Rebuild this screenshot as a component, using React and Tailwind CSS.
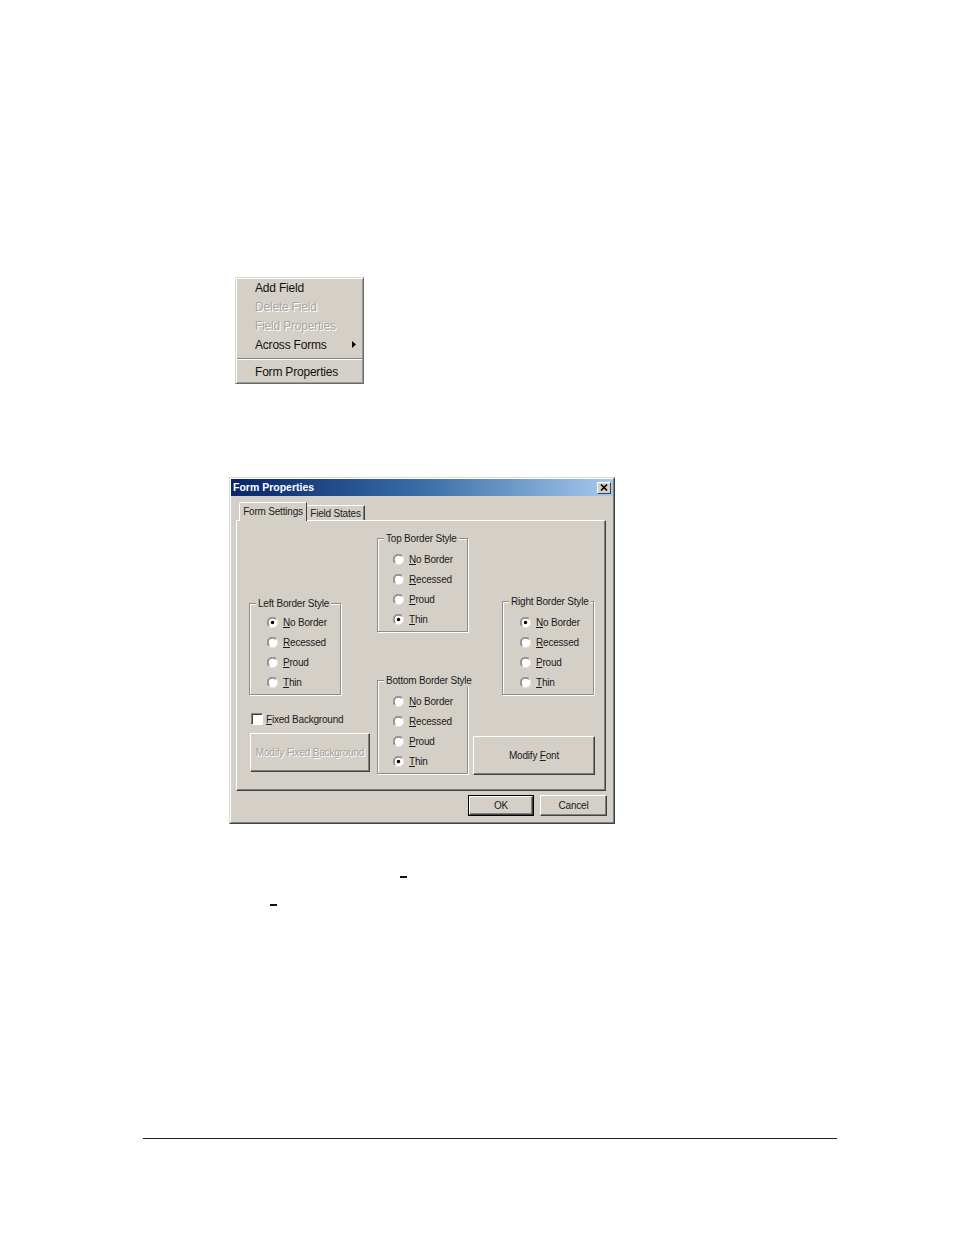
import React from 'react';

const FONT = "font-['Liberation_Sans',Arial,sans-serif]";

function MenuItem({ label, disabled, submenu }) {
  return (
    <div className="flex items-center h-[19px] pl-[19px] pr-[7px]">
      <span className={disabled ? 'text-[#a9a7a3] [text-shadow:1px_1px_0_#fff]' : 'text-[#111]'}>{label}</span>
      {submenu && (
        <svg width="4" height="7" viewBox="0 0 4 7" className="ml-auto">
          <polygon points="0,0 4,3.5 0,7" fill="#000" />
        </svg>
      )}
    </div>
  );
}

function ContextMenu() {
  return (
    <div className="self-start ml-[235px] mt-[277px] w-[129px] bg-[#d4d0c8] border border-t-[#dcd9d3] border-l-[#dcd9d3] border-r-[#6a6a6a] border-b-[#6a6a6a] shadow-[inset_1px_1px_0_#fff,inset_-1px_-1px_0_#9a9a9a] pb-[2px] text-[12px] tracking-[-0.2px]">
      <MenuItem label="Add Field" />
      <MenuItem label="Delete Field" disabled />
      <MenuItem label="Field Properties" disabled />
      <MenuItem label="Across Forms" submenu />
      <div className="h-[8px] flex items-center px-[1px]">
        <div className="w-full h-px bg-[#808080] shadow-[0_1px_0_#fff]" />
      </div>
      <MenuItem label="Form Properties" />
    </div>
  );
}

function Radio({ checked }) {
  return (
    <svg width="11" height="11" viewBox="0 0 12 12" className="shrink-0">
      <circle cx="6" cy="6" r="5.5" fill="#fff" />
      <path d="M10.2 1.8 A5.6 5.6 0 0 0 1.8 10.2" stroke="#8a8a8a" strokeWidth="1" fill="none" />
      <path d="M9.4 2.6 A4.6 4.6 0 0 0 2.6 9.4" stroke="#5a5a5a" strokeWidth="1" fill="none" />
      <path d="M1.8 10.2 A5.6 5.6 0 0 0 10.2 1.8" stroke="#e4e2de" strokeWidth="1" fill="none" />
      {checked && <circle cx="6" cy="6" r="1.9" fill="#000" />}
    </svg>
  );
}

function Mnemonic({ text }) {
  return (
    <span>
      <span className="underline underline-offset-[1px] decoration-1">{text[0]}</span>
      {text.slice(1)}
    </span>
  );
}

function GroupBox({ title, checked, className, padLeft, padTop }) {
  const options = ['No Border', 'Recessed', 'Proud', 'Thin'];
  return (
    <div className={`relative border border-[#8f8d89] shadow-[inset_1px_1px_0_#fff,1px_1px_0_#fff] ${className}`}>
      <span className="absolute -top-[7px] left-[6px] px-[2px] bg-[#d4d0c8] leading-[13px] whitespace-nowrap">{title}</span>
      <div className={`${padLeft} ${padTop} pb-[2px]`}>
        {options.map((o) => (
          <div key={o} className="flex items-center h-[20px] gap-[5px]">
            <Radio checked={o === checked} />
            <Mnemonic text={o} />
          </div>
        ))}
      </div>
    </div>
  );
}

function Button({ children, className, isDefault }) {
  return (
    <div className={`flex items-center justify-center bg-[#d4d0c8] ${isDefault ? 'border border-black' : ''} ${className}`}>
      <div className="w-full h-full flex items-center justify-center border border-t-white border-l-white border-r-[#404040] border-b-[#404040] shadow-[inset_-1px_-1px_0_#808080]">
        {children}
      </div>
    </div>
  );
}

function Dialog() {
  return (
    <div className="self-start ml-[229px] mt-[93px] w-[386px] bg-[#d4d0c8] border border-t-[#dcd9d3] border-l-[#dcd9d3] border-r-[#404040] border-b-[#404040] text-[10px] tracking-[-0.2px] text-[#1a1a1a]">
      <div className="border border-t-white border-l-white border-r-[#808080] border-b-[#808080]">
        {/* title bar */}
        <div className="h-[17px] flex items-center pl-[2px] pr-[2px] bg-gradient-to-r from-[#0a246a] via-[#3a6ea5] to-[#a6caf0]">
          <span className="text-white font-bold text-[10.5px] tracking-normal">Form Properties</span>
          <div className="ml-auto w-[14px] h-[12px] bg-[#d4d0c8] border border-t-white border-l-white border-r-[#404040] border-b-[#404040] flex items-center justify-center">
            <svg width="8" height="7" viewBox="0 0 8 7">
              <path d="M1 0.5 L7 6.5 M7 0.5 L1 6.5" stroke="#000" strokeWidth="1.6" />
            </svg>
          </div>
        </div>

        <div className="pl-[5px] pr-[7px] pb-[6px]">
          {/* tabs */}
          <div className="mt-[6px] h-[18px] flex items-end pl-[3px]">
            <div className="relative top-px z-10 h-[19px] w-[68px] flex items-center justify-center bg-[#d4d0c8] border-l border-t border-r border-l-white border-t-white border-r-[#404040] rounded-tl-[2px] pb-[1px]">
              Form Settings
            </div>
            <div className="h-[15px] w-[58px] flex items-center justify-center bg-[#d4d0c8] border-t border-r border-t-white border-r-[#404040] shadow-[inset_-1px_0_0_#808080]">
              Field States
            </div>
          </div>

          {/* panel */}
          <div className="h-[271px] border border-t-white border-l-white border-r-[#404040] border-b-[#404040] shadow-[inset_-1px_-1px_0_#808080] pl-[12px] flex items-start">
            {/* left column */}
            <div className="w-[121px] flex flex-col">
              <GroupBox title="Left Border Style" checked="No Border" className="mt-[82px] w-[92px]" padLeft="pl-[17px]" padTop="pt-[8px]" />
              <div className="mt-[17px] ml-[2px] h-[14px] flex items-center gap-[3px]">
                <div className="w-[12px] h-[12px] bg-white border border-t-[#808080] border-l-[#808080] border-r-white border-b-white shadow-[inset_1px_1px_0_#404040]" />
                <Mnemonic text="Fixed Background" />
              </div>
              <Button className="mt-[7px] ml-[1px] w-[120px] h-[39px]">
                <span className="text-[#a4a29e] [text-shadow:1px_1px_0_#fff] whitespace-nowrap">
                  Modify Fixed <span className="underline underline-offset-[1px]">B</span>ackground
                </span>
              </Button>
            </div>

            {/* middle column */}
            <div className="ml-[7px] w-[91px] flex flex-col">
              <GroupBox title="Top Border Style" checked="Thin" className="mt-[17px]" padLeft="pl-[15px]" padTop="pt-[10px]" />
              <GroupBox title="Bottom Border Style" checked="Thin" className="mt-[48px]" padLeft="pl-[15px]" padTop="pt-[10px]" />
            </div>

            {/* right column */}
            <div className="ml-[5px] w-[122px] flex flex-col">
              <GroupBox title="Right Border Style" checked="No Border" className="mt-[80px] ml-[29px] w-[92px]" padLeft="pl-[17px]" padTop="pt-[10px]" />
              <Button className="mt-[41px] w-[122px] h-[39px]">
                <span>Modify <Mnemonic text="Font" /></span>
              </Button>
            </div>
          </div>

          {/* dialog buttons */}
          <div className="mt-[4px] flex justify-end gap-[6px] -mr-px">
            <Button isDefault className="w-[66px] h-[21px]">OK</Button>
            <Button className="w-[67px] h-[21px]">Cancel</Button>
          </div>
        </div>
      </div>
    </div>
  );
}

export default function App() {
  return (
    <div className={`w-[954px] h-[1235px] bg-white overflow-hidden flex flex-col ${FONT}`}>
      <ContextMenu />
      <Dialog />
      <div className="self-start ml-[400px] mt-[52px] w-[7px] h-[2px] bg-[#111]" />
      <div className="self-start ml-[270px] mt-[26px] w-[7px] h-[2px] bg-[#111]" />
      <div className="self-start ml-[143px] mt-[232px] w-[694px] h-px bg-[#222]" />
    </div>
  );
}
